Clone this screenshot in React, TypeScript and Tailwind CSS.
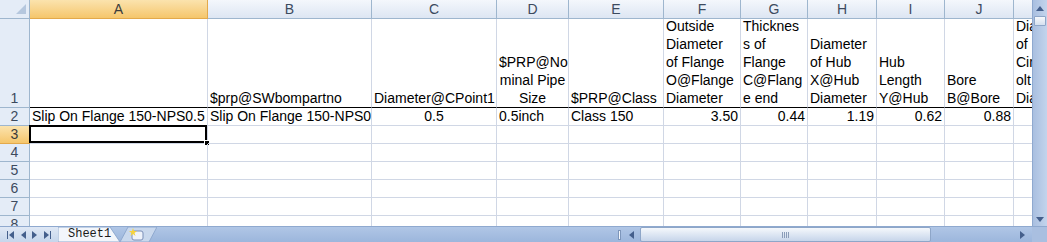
import React from "react";

const F = { fontFamily: '"Liberation Sans", Arial, sans-serif' };

type Cell = { lines?: string[]; text?: string; align?: "l" | "c" | "r" };

const colLetters = ["A", "B", "C", "D", "E", "F", "G", "H", "I", "J", "K"];

const row1: Cell[] = [
  { lines: [] },
  { lines: ["$prp@SWbompartno"] },
  { lines: ["Diameter@CPoint1"] },
  { lines: ["$PRP@No", "minal Pipe", "Size"], align: "c" },
  { lines: ["$PRP@Class"] },
  { lines: ["Outside", "Diameter", "of Flange", "O@Flange", "Diameter"] },
  { lines: ["Thicknes", "s of", "Flange", "C@Flang", "e end"] },
  { lines: ["Diameter", "of Hub", "X@Hub", "Diameter"] },
  { lines: ["Hub", "Length", "Y@Hub"] },
  { lines: ["Bore", "B@Bore"] },
  { lines: ["Diameter", "of Bolt", "Circle B", "olt", "Diameter"] },
];

const row2: Cell[] = [
  { text: "Slip On Flange 150-NPS0.5" },
  { text: "Slip On Flange 150-NPS0.5" },
  { text: "0.5", align: "c" },
  { text: "0.5inch" },
  { text: "Class 150" },
  { text: "3.50", align: "r" },
  { text: "0.44", align: "r" },
  { text: "1.19", align: "r" },
  { text: "0.62", align: "r" },
  { text: "0.88", align: "r" },
  { text: "" },
];

function alignCls(a?: "l" | "c" | "r") {
  if (a === "c") return "text-center";
  if (a === "r") return "text-right";
  return "text-left";
}

function Tri({ dir }: { dir: "l" | "r" | "u" | "d" }) {
  const pts =
    dir === "l"
      ? "5,0 5,8 0,4"
      : dir === "r"
      ? "0,0 0,8 5,4"
      : dir === "u"
      ? "0,5 8,5 4,0"
      : "0,0 8,0 4,5";
  const w = dir === "l" || dir === "r" ? 5 : 8;
  const h = dir === "l" || dir === "r" ? 8 : 5;
  return (
    <svg width={w} height={h} viewBox={`0 0 ${w} ${h}`}>
      <polygon points={pts} fill="#445f8c" />
    </svg>
  );
}

export default function App() {
  return (
    <div className="w-[1047px] h-[242px] flex flex-col bg-white overflow-hidden" style={F}>
      <div className="flex h-[226px]">
        <div className="w-[1032px] h-[226px] overflow-hidden">
          <div className="grid w-[1100px] grid-cols-[30px_178px_164px_125px_72px_95px_77px_67px_69px_68px_69px_80px] grid-rows-[19px_89px_repeat(7,18px)] text-[14px] text-black">
            {/* header row */}
            <div className="relative bg-[#e4ecf7] border-r border-b border-[#9eb6ce]">
              <svg className="absolute right-[3px] bottom-[4px]" width="10" height="10" viewBox="0 0 10 10">
                <polygon points="10,0 10,10 0,10" fill="#b5c7de" />
              </svg>
            </div>
            {colLetters.map((c, i) => (
              <div
                key={c}
                className={
                  i === 0
                    ? "flex items-center justify-center bg-linear-to-b from-[#fbe3ad] to-[#f5c66b] border-r border-b border-[#e3a94b] text-[#3b3b3b] leading-[18px]"
                    : "flex items-center justify-center bg-linear-to-b from-[#f4f7fc] to-[#dde6f3] border-r border-b border-[#9eb6ce] text-[#3c4a5e] leading-[18px]"
                }
              >
                {c}
              </div>
            ))}

            {/* row 1 */}
            <div className="flex items-end justify-center bg-[#e4ecf7] border-r border-b border-[#9eb6ce] text-[#3c4a5e] leading-[18px]">
              1
            </div>
            {row1.map((c, i) => (
              <div
                key={"r1" + i}
                className={`flex flex-col justify-end overflow-hidden border-r border-r-[#d0d7e5] border-b border-b-black px-[2px] leading-[18px] whitespace-nowrap ${alignCls(
                  c.align
                )}`}
              >
                {c.lines!.map((l, j) => (
                  <div key={j}>{l}</div>
                ))}
              </div>
            ))}

            {/* row 2 */}
            <div className="flex items-end justify-center bg-[#e4ecf7] border-r border-b border-[#9eb6ce] text-[#3c4a5e] leading-[17px]">
              2
            </div>
            {row2.map((c, i) => (
              <div
                key={"r2" + i}
                className={`overflow-hidden border-r border-b border-[#d0d7e5] px-[2px] leading-[17px] whitespace-nowrap ${alignCls(
                  c.align
                )}`}
              >
                {c.text}
              </div>
            ))}

            {/* rows 3..8 */}
            {[3, 4, 5, 6, 7, 8].map((r) => (
              <React.Fragment key={"r" + r}>
                <div
                  className={
                    r === 3
                      ? "flex items-end justify-center bg-linear-to-b from-[#fbe3ad] to-[#f5c66b] border-r border-b border-[#e3a94b] text-[#3b3b3b] leading-[17px]"
                      : "flex items-end justify-center bg-[#e4ecf7] border-r border-b border-[#9eb6ce] text-[#3c4a5e] leading-[17px]"
                  }
                >
                  {r}
                </div>
                {colLetters.map((c, i) => (
                  <div key={c + r} className="relative border-r border-b border-[#d0d7e5]">
                    {r === 3 && i === 0 && (
                      <>
                        <div className="absolute -top-[1px] -left-[1px] right-0 bottom-0 border-2 border-black" />
                        <div className="absolute -right-[3px] -bottom-[3px] w-[6px] h-[6px] bg-black border border-white" />
                      </>
                    )}
                  </div>
                ))}
              </React.Fragment>
            ))}
          </div>
        </div>

        {/* vertical scrollbar */}
        <div className="w-[15px] h-[226px] flex flex-col items-center bg-linear-to-r from-[#a9bfe0] to-[#c3d4ec] border-l border-[#8fa9cf]">
          <div className="h-[16px] flex items-center justify-center">
            <Tri dir="u" />
          </div>
          <div className="w-[12px] h-[10px] bg-linear-to-b from-[#f7f9fc] to-[#d5e0ef] border border-[#8ea6c8] rounded-[1px]" />
          <div className="flex-1" />
          <div className="h-[14px] flex items-center justify-center">
            <Tri dir="d" />
          </div>
        </div>
      </div>

      {/* bottom bar */}
      <div className="flex h-[16px] border-t border-[#8fa9cf] bg-linear-to-b from-[#b0c6e6] to-[#9cb6dc]">
        <div className="w-[58px] flex items-center justify-around px-[4px] bg-linear-to-b from-[#dfe8f5] to-[#c6d6ec]">
          <div className="flex items-center gap-[1px]">
            <div className="w-[1px] h-[8px] bg-[#445f8c]" />
            <Tri dir="l" />
          </div>
          <Tri dir="l" />
          <Tri dir="r" />
          <div className="flex items-center gap-[1px]">
            <Tri dir="r" />
            <div className="w-[1px] h-[8px] bg-[#445f8c]" />
          </div>
        </div>
        <div className="relative w-[62px] h-full">
          <svg className="absolute inset-0" width="62" height="15" viewBox="0 0 62 15">
            <polygon points="0,0 52,0 62,15 0,15" fill="#f3f6fb" stroke="#8fa9cf" strokeWidth="1" />
          </svg>
          <div
            className="relative pl-[10px] text-[12px] leading-[15px] text-[#1a1a1a]"
            style={{ fontFamily: '"Liberation Mono", "DejaVu Sans Mono", monospace' }}
          >
            Sheet1
          </div>
        </div>
        <div className="relative w-[37px] h-full">
          <svg className="absolute inset-0" width="37" height="15" viewBox="0 0 37 15">
            <polygon points="0,15 8,0 37,0 29,15" fill="#c9d8ed" stroke="#8fa9cf" strokeWidth="1" />
            <rect x="12" y="4" width="11" height="9" rx="2" fill="#eef2fa" stroke="#7b8fb8" strokeWidth="1" />
            <polygon points="13,1 14,4 17,4 14.5,6 15.5,9 13,7 10.5,9 11.5,6 9,4 12,4" fill="#f6d23c" />
          </svg>
        </div>
        <div className="flex-1" />
        <div className="w-[5px] flex items-center justify-center">
          <div className="w-[3px] h-[10px] bg-[#f4f7fb] border border-[#7d96bb]" />
        </div>
        <div className="w-[18px] flex items-center justify-center">
          <Tri dir="l" />
        </div>
        <div className="w-[291px] h-full flex items-center justify-center bg-linear-to-b from-[#f5f8fc] to-[#c7d5ea] border border-[#8ea6c8] rounded-[2px]">
          <div className="flex gap-[1px]">
            <div className="w-[1px] h-[6px] bg-[#8a9cb8]" />
            <div className="w-[1px] h-[6px] bg-[#8a9cb8]" />
            <div className="w-[1px] h-[6px] bg-[#8a9cb8]" />
            <div className="w-[1px] h-[6px] bg-[#8a9cb8]" />
          </div>
        </div>
        <div className="w-[82px]" />
        <div className="w-[19px] flex items-center justify-center">
          <Tri dir="r" />
        </div>
        <div className="w-[15px] bg-[#a9bfe0]" />
      </div>
    </div>
  );
}
